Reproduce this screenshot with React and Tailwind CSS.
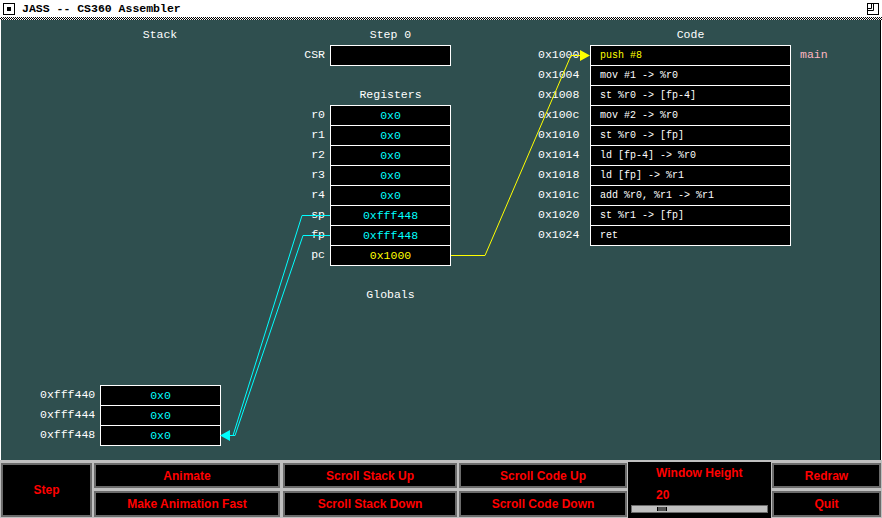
import React from 'react';

const regs = [
  ['r0', '0x0'],
  ['r1', '0x0'],
  ['r2', '0x0'],
  ['r3', '0x0'],
  ['r4', '0x0'],
  ['sp', '0xfff448'],
  ['fp', '0xfff448'],
  ['pc', '0x1000'],
];

const code = [
  ['0x1000', 'push #8'],
  ['0x1004', 'mov #1 -> %r0'],
  ['0x1008', 'st %r0 -> [fp-4]'],
  ['0x100c', 'mov #2 -> %r0'],
  ['0x1010', 'st %r0 -> [fp]'],
  ['0x1014', 'ld [fp-4] -> %r0'],
  ['0x1018', 'ld [fp] -> %r1'],
  ['0x101c', 'add %r0, %r1 -> %r1'],
  ['0x1020', 'st %r1 -> [fp]'],
  ['0x1024', 'ret'],
];

const stack = [
  ['0xfff440', '0x0'],
  ['0xfff444', '0x0'],
  ['0xfff448', '0x0'],
];

const mono = "font-['Liberation_Mono',monospace]";

const Heading = ({ children, className = '' }) => (
  <div className={`h-[14px] leading-[14px] text-center text-white text-[11.5px] ${className}`}>{children}</div>
);

const Row = ({ label, labelClass, boxClass, last, children }) => (
  <div className={`flex ${last ? 'h-[21px]' : 'h-[20px]'}`}>
    <div className={`h-[20px] leading-[20px] text-white text-[11.5px] ${labelClass}`}>{label}</div>
    <div className={`bg-black border-t border-x border-white ${last ? 'border-b' : ''} ${boxClass}`}>{children}</div>
  </div>
);

const Btn = ({ children, className = '' }) => (
  <div className={`bg-black border-2 border-[#6b6b6b] flex items-center justify-center text-[#ff0000] text-[12px] font-bold ${className}`}>
    {children}
  </div>
);

export default function App() {
  return (
    <div className="w-[882px] h-[518px] bg-white overflow-hidden flex flex-col">
      {/* title bar */}
      <div className={`h-[17px] flex items-center relative ${mono}`}>
        <svg className="absolute left-[3px] top-[3px]" width="12" height="12" viewBox="0 0 12 12">
          <rect x="0.5" y="0.5" width="11" height="11" fill="none" stroke="#000" />
          <rect x="4" y="4" width="4" height="4" fill="#000" />
        </svg>
        <span className="ml-[22px] text-[11.5px] font-bold text-black leading-[14px]">JASS -- CS360 Assembler</span>
        <svg className="absolute left-[867px] top-[3px]" width="12" height="12" viewBox="0 0 12 12">
          <rect x="0.5" y="0.5" width="11" height="11" fill="none" stroke="#000" />
          <path d="M6.5 .5V7.5H.5M4.5 .5V5.5H.5" fill="none" stroke="#000" />
        </svg>
      </div>
      <div className="h-[3px] bg-[repeating-conic-gradient(#000_0_25%,#fff_0_50%)] bg-[length:2px_2px]" />

      {/* canvas */}
      <div className={`relative ml-px w-[880px] h-[440px] bg-[#2f4f4f] border-r border-black flex ${mono}`}>
        {/* stack column */}
        <div className="w-[224px] flex flex-col pt-[8px]">
          <Heading className="ml-[99px] w-[120px]">Stack</Heading>
          <div className="mt-auto mb-[14px]">
            {stack.map(([a, v], i) => (
              <Row key={a} label={a} last={i === stack.length - 1} labelClass="w-[99px] pl-[39px]" boxClass="w-[121px] h-full text-center text-[#00ffff] text-[11.5px] leading-[19px]">
                {v}
              </Row>
            ))}
          </div>
        </div>

        {/* registers column */}
        <div className="w-[226px] flex flex-col pt-[8px]">
          <Heading className="ml-[105px] w-[121px]">Step 0</Heading>
          <div className="mt-[3px]">
            <Row label="CSR" last labelClass="w-[105px] text-right pr-[5px]" boxClass="w-[121px] h-full" />
          </div>
          <Heading className="ml-[105px] w-[121px] mt-[22px]">Registers</Heading>
          <div className="mt-[3px]">
            {regs.map(([r, v], i) => (
              <Row key={r} label={r} last={i === regs.length - 1} labelClass="w-[105px] text-right pr-[5px]" boxClass={`w-[121px] h-full text-center text-[11.5px] leading-[19px] ${r === 'pc' ? 'text-[#ffff00]' : 'text-[#00ffff]'}`}>
                {v}
              </Row>
            ))}
          </div>
          <Heading className="ml-[105px] w-[121px] mt-[22px]">Globals</Heading>
        </div>

        {/* code column */}
        <div className="flex flex-col pt-[8px] ml-[87px]">
          <Heading className="ml-[52px] w-[201px]">Code</Heading>
          <div className="mt-[3px] relative">
            {code.map(([a, c], i) => (
              <Row key={a} label={a} last={i === code.length - 1} labelClass="w-[52px]" boxClass={`w-[201px] h-full pl-[9px] text-[10px] leading-[19px] ${i === 0 ? 'text-[#ffff00]' : 'text-white'}`}>
                {c}
              </Row>
            ))}
            <div className="absolute left-[262px] top-0 h-[20px] leading-[20px] text-[11.5px] text-[#ffb6c1]">main</div>
          </div>
        </div>

        {/* pointer arrows */}
        <svg className="absolute left-0 top-0 pointer-events-none" width="879" height="440" viewBox="1 20 879 440">
          <polyline points="451,255.5 485,255.5 571,55.5 581,55.5" fill="none" stroke="#ffff00" strokeWidth="1" />
          <polygon points="580,50 590,55.5 580,61" fill="#ffff00" />
          <polyline points="330,215.5 302,215.5 233,435.5 229,435.5" fill="none" stroke="#00ffff" strokeWidth="1" />
          <polyline points="330,235.5 303,235.5 235,435.5 229,435.5" fill="none" stroke="#00ffff" strokeWidth="1" />
          <polygon points="220,435.5 230,430 230,441" fill="#00ffff" />
        </svg>
      </div>

      {/* control panel */}
      <div className="h-[58px] bg-[#c0c0c0] flex pt-[3px] pl-px font-['Liberation_Sans',Arial,sans-serif]">
        <Btn className="w-[91px] h-[54px]">Step</Btn>
        <div className="w-[186px] ml-[2px] flex flex-col gap-[3px]">
          <Btn className="h-[25px]">Animate</Btn>
          <Btn className="h-[26px]">Make Animation Fast</Btn>
        </div>
        <div className="w-[174px] ml-[3px] flex flex-col gap-[3px]">
          <Btn className="h-[25px]">Scroll Stack Up</Btn>
          <Btn className="h-[26px]">Scroll Stack Down</Btn>
        </div>
        <div className="w-[168px] ml-[2px] flex flex-col gap-[3px]">
          <Btn className="h-[25px]">Scroll Code Up</Btn>
          <Btn className="h-[26px]">Scroll Code Down</Btn>
        </div>
        <div className="w-[143px] ml-px -mt-[1px] h-[56px] bg-black flex flex-col text-[#ff0000] text-[12px] font-bold">
          <div className="ml-[28px] mt-[4px] leading-[14px]">Window Height</div>
          <div className="ml-[28px] mt-[8px] leading-[14px]">20</div>
          <div className="mx-[3px] mt-[3px] h-[8px] bg-[#c0c0c0] border border-[#6b6b6b] relative">
            <div className="absolute left-[25px] top-[1px] w-[10px] h-[4px] bg-[#555] border-x border-black" />
          </div>
        </div>
        <div className="w-[109px] ml-px flex flex-col gap-[3px]">
          <Btn className="h-[25px]">Redraw</Btn>
          <Btn className="h-[26px]">Quit</Btn>
        </div>
      </div>
    </div>
  );
}
